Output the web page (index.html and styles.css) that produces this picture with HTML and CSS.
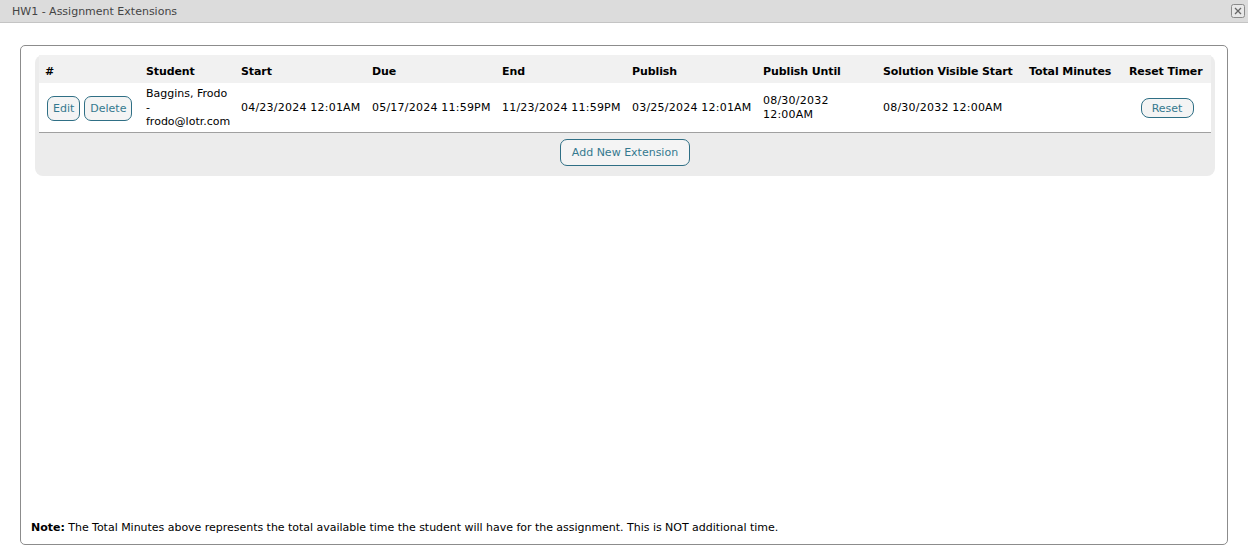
FILE: index.html
```html
<!DOCTYPE html>
<html lang="en">
<head>
<meta charset="utf-8">
<title>HW1 - Assignment Extensions</title>
<link rel="stylesheet" href="styles.css">
</head>
<body>
<header class="titlebar">
  <span class="title">HW1 - Assignment Extensions</span>
  <button class="close" type="button" aria-label="Close">
    <svg viewBox="0 0 14 14" width="14" height="14"><rect x="0.5" y="0.5" width="13" height="13" rx="2" fill="#e8e8e8" stroke="#8a8a8a"/><path d="M4 4l6 6M10 4l-6 6" stroke="#666" stroke-width="1.3" fill="none"/></svg>
  </button>
</header>
<main class="frame">
  <section class="panel">
    <table class="grid">
      <colgroup>
        <col class="c1"><col class="c2"><col class="c3"><col class="c4"><col class="c5">
        <col class="c6"><col class="c7"><col class="c8"><col class="c9"><col class="c10">
      </colgroup>
      <thead>
        <tr>
          <th>#</th><th>Student</th><th>Start</th><th>Due</th><th>End</th><th>Publish</th>
          <th>Publish Until</th><th>Solution Visible Start</th><th>Total Minutes</th><th>Reset Timer</th>
        </tr>
      </thead>
      <tbody>
        <tr>
          <td class="actions"><button class="btn" type="button">Edit</button><button class="btn" type="button">Delete</button></td>
          <td>Baggins, Frodo<br>-<br>frodo@lotr.com</td>
          <td class="date">04/23/2024 12:01AM</td>
          <td class="date">05/17/2024 11:59PM</td>
          <td class="date">11/23/2024 11:59PM</td>
          <td class="date">03/25/2024 12:01AM</td>
          <td class="date">08/30/2032<br>12:00AM</td>
          <td class="date">08/30/2032 12:00AM</td>
          <td></td>
          <td class="center"><button class="btn btn-reset" type="button">Reset</button></td>
        </tr>
      </tbody>
    </table>
    <div class="panel-foot"><button class="btn btn-add" type="button">Add New Extension</button></div>
  </section>
  <p class="note"><strong>Note:</strong> The Total Minutes above represents the total available time the student will have for the assignment. This is NOT additional time.</p>
</main>
</body>
</html>
```
FILE: styles.css
```css
* { box-sizing: border-box; }
html, body { height: 100%; }
body {
  margin: 0;
  height: 557px;
  overflow: hidden;
  background: #fff;
  color: #000;
  font-family: "DejaVu Sans", Verdana, sans-serif;
  font-size: 11px;
  display: flex;
  flex-direction: column;
}
.titlebar {
  height: 23px;
  flex: none;
  background: #dcdcdc;
  border-bottom: 1px solid #c4c4c4;
  padding: 0 3px 0 12px;
  display: flex;
  align-items: center;
  justify-content: space-between;
}
.title { color: #444; font-size: 11px; padding-top: 1px; }
.close { padding: 0; border: 0; background: none; width: 14px; height: 14px; display: block; }
.close svg { display: block; }
.frame {
  margin: 22px 20px 12px;
  flex: 1;
  min-height: 0;
  border: 1px solid #8c8c8c;
  border-radius: 5px;
  padding: 9px 12px 9px 10px;
  display: flex;
  flex-direction: column;
  justify-content: space-between;
}
.panel {
  background: #ececec;
  border-radius: 8px;
  margin-left: 4px;
  padding: 0 4px;
  height: 121px;
}
.grid {
  width: 1172px;
  table-layout: fixed;
  border-collapse: collapse;
}
.c1 { width: 101px; } .c2 { width: 95px; } .c3 { width: 131px; } .c4 { width: 130px; } .c5 { width: 130px; }
.c6 { width: 131px; } .c7 { width: 120px; } .c8 { width: 146px; } .c9 { width: 100px; } .c10 { width: 88px; }
.grid th {
  height: 28px;
  padding: 4px 6px 0;
  background: #f1f1f1;
  text-align: left;
  font-size: 11px;
  font-weight: bold;
  letter-spacing: -0.1px;
  white-space: nowrap;
}
.grid td {
  height: 49px;
  padding: 2px 6px 0;
  background: #fff;
  border-bottom: 1px solid #a0a0a0;
  line-height: 14px;
  vertical-align: middle;
}
.grid td.date { letter-spacing: 0.22px; white-space: nowrap; }
.grid td.actions { padding: 2px 0 0 8px; white-space: nowrap; }
.grid td.center { text-align: center; padding: 2px 0 0; }
.btn {
  font: inherit;
  color: #34798f;
  background: #f4f4f4;
  border: 1px solid #2f6f85;
  border-radius: 7px;
  height: 25px;
  padding: 2px 5px 0;
  margin: 0 4px 0 0;
}
.btn-reset { height: 20px; width: 53px; margin: 0; padding: 2px 0 0; border-radius: 8px; }
.btn-add { height: 27px; width: 130px; margin: 0; padding: 1px 0 0; }
.panel-foot { display: flex; justify-content: center; padding-top: 6px; }
.note { margin: 0; font-size: 11px; line-height: 14px; letter-spacing: -0.025px; }
```
